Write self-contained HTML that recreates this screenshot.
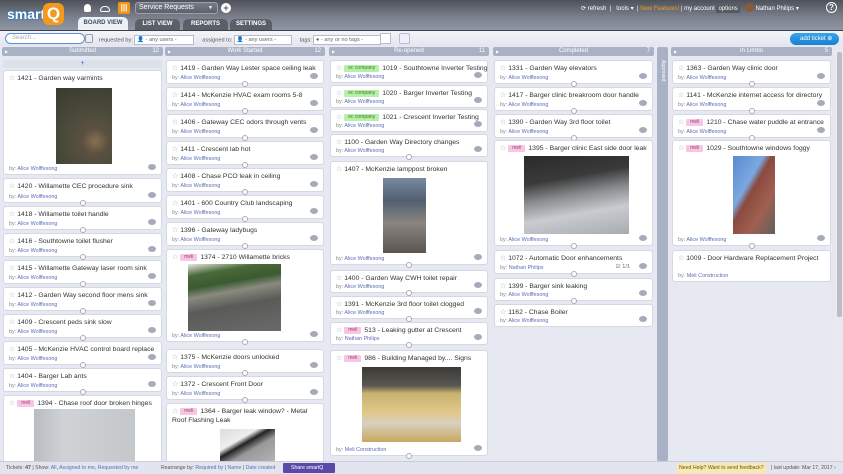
<!DOCTYPE html>
<html><head><meta charset="utf-8"><style>
*{margin:0;padding:0;box-sizing:border-box}
body{width:843px;height:474px;overflow:hidden;background:#e6e9f1;font-family:"Liberation Sans",sans-serif;position:relative}
.hdr{position:absolute;left:0;top:0;width:843px;height:30px;background:linear-gradient(#4f525a,#7c828f 60%,#8f96a4)}
.tb{position:absolute;left:0;top:30px;width:843px;height:16px;background:linear-gradient(#f3f4f8,#e3e6ee);border-top:1px solid #3d4048}
.tab{position:absolute;top:19px;height:11px;font-size:6px;font-weight:bold;color:#fff;text-align:center;line-height:11px;background:#5b5f68;border-radius:5px 5px 0 0}
.tab.a{background:#eef0f5;color:#3a4a6a;top:17px;height:13px;line-height:13px}
.col{position:absolute;top:0;height:461px}
.ch{position:absolute;top:47px;left:0;right:0;height:9px;background:#a9b2c5;border-radius:2px;color:#fff;font-size:6px;text-align:center;line-height:9px}
.ch i{position:absolute;right:4px;font-style:normal}
.ch b{position:absolute;left:3px;font-weight:normal;font-size:4px}
.c{position:absolute;left:1px;right:1px;background:#fff;border:1px solid #d3d8e3;border-radius:3px}
.t{position:absolute;left:5px;top:3px;font-size:6.8px;color:#333;white-space:nowrap;line-height:9px}
.t:before{content:"☆ ";color:#aaa;font-size:7px}
.b{position:absolute;left:5px;bottom:2px;font-size:5.4px;color:#888}
.b span{color:#5b6db8}
.m{position:absolute;right:5px;bottom:4px;width:8px;height:6px;background:#a5abb8;border-radius:50%}
.d{position:absolute;left:50%;bottom:-4px;width:6px;height:6px;margin-left:-3px;background:#fff;border:1px solid #aab;border-radius:50%}
.tg{display:inline-block;font-size:5px;padding:0 4px;margin-right:3px;border-radius:1px;line-height:7px;vertical-align:1px}
.g{background:#b7f0a8;color:#3a7a30}.p{background:#f7c6e3;color:#a0407a}
.im{position:absolute}
.ft{position:absolute;left:0;top:461px;width:843px;height:13px;background:#e2e5ee;border-top:1px solid #c9cedb;font-size:5.2px;color:#555;line-height:12px}
.ft span{color:#5b6db8}
</style></head><body>
<div class="hdr"></div>
<div style="position:absolute;left:7px;top:6px;font-size:14px;font-weight:bold;color:#fff;text-shadow:0 0 2px #2a7ac0,0 0 2px #2a7ac0">smart</div>
<div style="position:absolute;left:43px;top:3px;width:21px;height:22px;background:#f39a1e;border-radius:6px;color:#fff;font-weight:bold;font-size:17px;text-align:center;line-height:21px">Q</div>
<div style="position:absolute;left:84px;top:4px;width:7px;height:8px;background:#fff;border-radius:50% 50% 2px 2px"></div>
<div style="position:absolute;left:100px;top:6px;width:10px;height:6px;border:1.5px solid #fff;border-radius:5px 5px 2px 2px"></div>
<div style="position:absolute;left:118px;top:2px;width:12px;height:12px;background:#f29418;border-radius:2px;color:#fff;font-size:8px;text-align:center;line-height:12px;font-weight:bold">|||</div>
<div style="position:absolute;left:135px;top:2px;width:83px;height:12px;background:linear-gradient(#777c87,#5c616c);border:1px solid #9aa0ad;border-radius:3px;color:#fff;font-size:7px;line-height:10px;padding-left:3px">Service Requests<span style="position:absolute;right:4px;font-size:5px">▼</span></div>
<div style="position:absolute;left:221px;top:3px;width:10px;height:10px;background:#fff;border-radius:50%;color:#555;font-size:9px;text-align:center;line-height:10px;font-weight:bold">+</div>
<div class="tab a" style="left:78px;width:50px">BOARD VIEW</div>
<div class="tab" style="left:135px;width:45px">LIST VIEW</div>
<div class="tab" style="left:183px;width:45px">REPORTS</div>
<div class="tab" style="left:230px;width:42px">SETTINGS</div>
<div style="position:absolute;left:581px;top:3px;font-size:6px;color:#fff;white-space:nowrap">⟳ refresh &nbsp;| &nbsp; tools ▾ &nbsp;| <span style="color:#f39a1e">New Features!</span> | my account <span style="background:#555960;padding:1px 2px">options</span> &nbsp; <span style="display:inline-block;width:9px;height:9px;background:#8a5a3a;border-radius:50%;vertical-align:-2px"></span> Nathan Philips ▾</div>
<div style="position:absolute;left:826px;top:2px;width:11px;height:11px;border:1.5px solid #fff;border-radius:50%;color:#fff;font-size:8px;text-align:center;line-height:9px;font-weight:bold">?</div>
<div class="tb"></div>
<div style="position:absolute;left:5px;top:33px;width:80px;height:11px;background:#fff;border:1px solid #5b8fd0;border-radius:6px;font-size:6px;color:#aaa;font-style:italic;line-height:9px;padding-left:6px">Search...</div>
<div style="position:absolute;left:85px;top:34px;width:8px;height:9px;background:#eee;border:1px solid #99a;border-radius:2px"></div>
<div style="position:absolute;left:99px;top:35px;font-size:5.6px;color:#555;white-space:nowrap">requested by: <span style="display:inline-block;width:60px;height:10px;background:#fff;border:1px solid #bbc;vertical-align:middle;line-height:8px;color:#666">&nbsp;👤 - any users -</span> &nbsp; &nbsp; assigned to: <span style="display:inline-block;width:58px;height:10px;background:#fff;border:1px solid #bbc;vertical-align:middle;line-height:8px;color:#666">&nbsp;👤 - any users -</span> &nbsp; &nbsp; tags: <span style="display:inline-block;width:68px;height:10px;background:#fff;border:1px solid #bbc;vertical-align:middle;line-height:8px;color:#666">&nbsp;● - any or no tags -</span></div>
<div style="position:absolute;left:380px;top:33px;width:11px;height:11px;background:#fff;border:1px solid #bbc"></div>
<div style="position:absolute;left:399px;top:33px;width:11px;height:11px;background:#eef;border:1px solid #bbc;border-radius:2px"></div>
<div style="position:absolute;left:790px;top:33px;width:49px;height:12px;background:linear-gradient(#3aa3e8,#1a7fd0);border-radius:6px;color:#fff;font-size:6px;line-height:12px;padding-left:10px">add ticket ⊕</div>

<!-- Submitted -->
<div class="col" style="left:2px;width:161px">
<div class="ch"><b>▶</b>Submitted<i>12</i></div>
<div style="position:absolute;top:60px;left:1px;right:1px;height:8px;background:#dde1ea;border-radius:2px;color:#3a6ad0;font-size:7px;text-align:center;line-height:8px">+</div>
<div class="c" style="top:70px;height:105px"><div class="t">1421 - Garden way varmints</div><div class="im" style="left:52px;top:17px;width:56px;height:76px;background:radial-gradient(circle at 70% 70%,#8a7050 0,#5a5040 20%,#4a4a3a 50%,#3a3830)"></div><div class="b">by: <span>Alice Wolffesong</span></div><div class="m"></div></div>
<div class="c" style="top:178px;height:25px"><div class="t">1420 - Willamette CEC procedure sink</div><div class="b">by: <span>Alice Wolffesong</span></div><div class="m"></div><div class="d"></div></div>
<div class="c" style="top:206px;height:24px"><div class="t">1418 - Willamette toilet handle</div><div class="b">by: <span>Alice Wolffesong</span></div><div class="m"></div><div class="d"></div></div>
<div class="c" style="top:233px;height:24px"><div class="t">1416 - Southtowne toilet flusher</div><div class="b">by: <span>Alice Wolffesong</span></div><div class="m"></div><div class="d"></div></div>
<div class="c" style="top:260px;height:24px"><div class="t">1415 - Willamette Gateway laser room sink</div><div class="b">by: <span>Alice Wolffesong</span></div><div class="m"></div><div class="d"></div></div>
<div class="c" style="top:287px;height:24px"><div class="t">1412 - Garden Way second floor mens sink</div><div class="b">by: <span>Alice Wolffesong</span></div><div class="m"></div><div class="d"></div></div>
<div class="c" style="top:314px;height:24px"><div class="t">1409 - Crescent peds sink slow</div><div class="b">by: <span>Alice Wolffesong</span></div><div class="m"></div><div class="d"></div></div>
<div class="c" style="top:341px;height:24px"><div class="t">1405 - McKenzie HVAC control board replace</div><div class="b">by: <span>Alice Wolffesong</span></div><div class="m"></div><div class="d"></div></div>
<div class="c" style="top:368px;height:24px"><div class="t">1404 - Barger Lab ants</div><div class="b">by: <span>Alice Wolffesong</span></div><div class="m"></div><div class="d"></div></div>
<div class="c" style="top:395px;height:70px;border-bottom:none"><div class="t"><span class="tg p">meli</span>1394 - Chase roof door broken hinges</div><div class="im" style="left:30px;top:13px;width:101px;height:60px;background:linear-gradient(90deg,#b8bcc0,#d0d3d6 30%,#c4c7ca)"></div></div>
</div>

<!-- Work Started -->
<div class="col" style="left:165px;width:160px">
<div class="ch"><b>▶</b>Work Started<i>12</i></div>
<div class="c" style="top:60px;height:24px"><div class="t">1419 - Garden Way Lester space ceiling leak</div><div class="b">by: <span>Alice Wolffesong</span></div><div class="m"></div><div class="d"></div></div>
<div class="c" style="top:87px;height:24px"><div class="t">1414 - McKenzie HVAC exam rooms 5-8</div><div class="b">by: <span>Alice Wolffesong</span></div><div class="m"></div><div class="d"></div></div>
<div class="c" style="top:114px;height:24px"><div class="t">1406 - Gateway CEC odors through vents</div><div class="b">by: <span>Alice Wolffesong</span></div><div class="m"></div><div class="d"></div></div>
<div class="c" style="top:141px;height:24px"><div class="t">1411 - Crescent lab hot</div><div class="b">by: <span>Alice Wolffesong</span></div><div class="m"></div><div class="d"></div></div>
<div class="c" style="top:168px;height:24px"><div class="t">1408 - Chase PCO leak in ceiling</div><div class="b">by: <span>Alice Wolffesong</span></div><div class="m"></div><div class="d"></div></div>
<div class="c" style="top:195px;height:24px"><div class="t">1401 - 600 Country Club landscaping</div><div class="b">by: <span>Alice Wolffesong</span></div><div class="m"></div><div class="d"></div></div>
<div class="c" style="top:222px;height:24px"><div class="t">1396 - Gateway ladybugs</div><div class="b">by: <span>Alice Wolffesong</span></div><div class="m"></div><div class="d"></div></div>
<div class="c" style="top:249px;height:93px"><div class="t"><span class="tg p">meli</span>1374 - 2710 Willamette bricks</div><div class="im" style="left:21px;top:14px;width:93px;height:67px;background:linear-gradient(170deg,#e8e8e0 0,#4a6a3a 15%,#3a5a30 30%,#8a8a80 42%,#5a5a58 60%,#6a6a68)"></div><div class="b">by: <span>Alice Wolffesong</span></div><div class="m"></div><div class="d"></div></div>
<div class="c" style="top:349px;height:24px"><div class="t">1375 - McKenzie doors unlocked</div><div class="b">by: <span>Alice Wolffesong</span></div><div class="m"></div><div class="d"></div></div>
<div class="c" style="top:376px;height:24px"><div class="t">1372 - Crescent Front Door</div><div class="b">by: <span>Alice Wolffesong</span></div><div class="m"></div><div class="d"></div></div>
<div class="c" style="top:403px;height:62px;border-bottom:none"><div class="t" style="white-space:normal;width:150px"><span class="tg p">meli</span>1364 - Barger leak window? - Metal Roof Flashing Leak</div><div class="im" style="left:53px;top:25px;width:55px;height:40px;background:linear-gradient(150deg,#ddd 0,#eee 30%,#222 40%,#999 55%,#bbb)"></div></div>
</div>

<!-- Re-opened -->
<div class="col" style="left:329px;width:160px">
<div class="ch"><b>▶</b>Re-opened<i>11</i></div>
<div class="c" style="top:60px;height:23px"><div class="t"><span class="tg g">ec company</span>1019 - Southtowne Inverter Testing</div><div class="b">by: <span>Alice Wolffesong</span></div><div class="m"></div></div>
<div class="c" style="top:85px;height:23px"><div class="t"><span class="tg g">ec company</span>1020 - Barger Inverter Testing</div><div class="b">by: <span>Alice Wolffesong</span></div><div class="m"></div></div>
<div class="c" style="top:109px;height:23px"><div class="t"><span class="tg g">ec company</span>1021 - Crescent Inverter Testing</div><div class="b">by: <span>Alice Wolffesong</span></div><div class="m"></div></div>
<div class="c" style="top:134px;height:23px"><div class="t">1100 - Garden Way Directory changes</div><div class="b">by: <span>Alice Wolffesong</span></div><div class="m"></div><div class="d"></div></div>
<div class="c" style="top:161px;height:104px"><div class="t">1407 - McKenzie lamppost broken</div><div class="im" style="left:52px;top:16px;width:43px;height:75px;background:linear-gradient(#7a8aa0 0,#506070 30%,#8a8580 60%,#5a5550)"></div><div class="b">by: <span>Alice Wolffesong</span></div><div class="m"></div><div class="d"></div></div>
<div class="c" style="top:270px;height:23px"><div class="t">1400 - Garden Way CWH toilet repair</div><div class="b">by: <span>Alice Wolffesong</span></div><div class="m"></div><div class="d"></div></div>
<div class="c" style="top:296px;height:23px"><div class="t">1391 - McKenzie 3rd floor toilet clogged</div><div class="b">by: <span>Alice Wolffesong</span></div><div class="m"></div><div class="d"></div></div>
<div class="c" style="top:322px;height:23px"><div class="t"><span class="tg p">meli</span>513 - Leaking gutter at Crescent</div><div class="b">by: <span>Nathan Philips</span></div><div class="m"></div><div class="d"></div></div>
<div class="c" style="top:350px;height:106px"><div class="t"><span class="tg p">meli</span>986 - Building Managed by.... Signs</div><div class="im" style="left:31px;top:16px;width:99px;height:75px;background:linear-gradient(#3a3a38 0,#5a5850 25%,#c8b070 35%,#e0c888 60%,#d8d0c0 75%,#c8a860)"></div><div class="b">by: <span>Meli Construction</span></div><div class="m"></div><div class="d"></div></div>
</div>

<!-- Completed -->
<div class="col" style="left:493px;width:161px">
<div class="ch"><b>▶</b>Completed<i>7</i></div>
<div class="c" style="top:60px;height:24px"><div class="t">1331 - Garden Way elevators</div><div class="b">by: <span>Alice Wolffesong</span></div><div class="m"></div><div class="d"></div></div>
<div class="c" style="top:87px;height:24px"><div class="t">1417 - Barger clinic breakroom door handle</div><div class="b">by: <span>Alice Wolffesong</span></div><div class="m"></div><div class="d"></div></div>
<div class="c" style="top:114px;height:24px"><div class="t">1390 - Garden Way 3rd floor toilet</div><div class="b">by: <span>Alice Wolffesong</span></div><div class="m"></div><div class="d"></div></div>
<div class="c" style="top:140px;height:106px"><div class="t"><span class="tg p">meli</span>1395 - Barger clinic East side door leak</div><div class="im" style="left:29px;top:15px;width:105px;height:78px;background:linear-gradient(170deg,#2a2a2a 0,#3a3a3a 30%,#8a8e90 50%,#c8ccd0 70%,#a8acb0)"></div><div class="b">by: <span>Alice Wolffesong</span></div><div class="m"></div><div class="d"></div></div>
<div class="c" style="top:250px;height:24px"><div class="t">1072 - Automatic Door enhancements</div><div class="b">by: <span>Nathan Philips</span></div><div style="position:absolute;right:22px;bottom:3px;font-size:5.6px;color:#666">☑ 1/1</div><div class="m"></div><div class="d"></div></div>
<div class="c" style="top:278px;height:23px"><div class="t">1399 - Barger sink leaking</div><div class="b">by: <span>Alice Wolffesong</span></div><div class="m"></div><div class="d"></div></div>
<div class="c" style="top:304px;height:23px"><div class="t">1162 - Chase Boiler</div><div class="b">by: <span>Alice Wolffesong</span></div><div class="m"></div></div>
</div>

<!-- Approved -->
<div style="position:absolute;left:657px;top:47px;width:11px;height:414px;background:#a9b2c5;border-radius:2px"></div>
<div style="position:absolute;left:660px;top:60px;font-size:5px;color:#fff;writing-mode:vertical-rl">Approved</div>

<!-- In Limbo -->
<div class="col" style="left:671px;width:161px">
<div class="ch"><b>▶</b>In Limbo<i>5</i></div>
<div class="c" style="top:60px;height:24px"><div class="t">1363 - Garden Way clinic door</div><div class="b">by: <span>Alice Wolffesong</span></div><div class="m"></div><div class="d"></div></div>
<div class="c" style="top:87px;height:24px"><div class="t">1141 - McKenzie internet access for directory</div><div class="b">by: <span>Alice Wolffesong</span></div><div class="m"></div><div class="d"></div></div>
<div class="c" style="top:114px;height:24px"><div class="t"><span class="tg p">meli</span>1210 - Chase water puddle at entrance</div><div class="b">by: <span>Alice Wolffesong</span></div><div class="m"></div><div class="d"></div></div>
<div class="c" style="top:140px;height:106px"><div class="t"><span class="tg p">meli</span>1029 - Southtowne windows foggy</div><div class="im" style="left:60px;top:15px;width:42px;height:78px;background:linear-gradient(120deg,#5a8ad0 0,#7aa8e0 35%,#8a4a40 45%,#a06050 70%,#606060)"></div><div class="b">by: <span>Alice Wolffesong</span></div><div class="m"></div><div class="d"></div></div>
<div class="c" style="top:250px;height:32px"><div class="t" style="white-space:normal;width:150px">1009 - Door Hardware Replacement Project</div><div class="b">by: <span>Meli Construction</span></div></div>
</div>

<div style="position:absolute;left:835px;top:47px;width:8px;height:414px;background:#e8eaf0"></div>
<div style="position:absolute;left:837px;top:52px;width:5px;height:265px;background:#b8bdc8;border-radius:2px"></div>

<div class="ft">
<span style="position:absolute;left:6px;color:#555">Tickets: <b>47</b> | Show: <span>All</span>, <span>Assigned to me</span>, <span>Requested by me</span></span>
<span style="position:absolute;left:161px;color:#555">Rearrange by: <span>Required by</span> | <span>Name</span> | <span>Date created</span></span>
<span style="position:absolute;left:283px;top:1px;width:52px;height:10px;background:#5a4aa8;color:#fff;line-height:10px;padding-left:8px;border-radius:1px">Share smartQ</span>
<span style="position:absolute;left:677px;top:1px;height:10px;background:#fbe9a8;color:#555;line-height:10px;padding:0 2px">Need Help? Want to send feedback?</span>
<span style="position:absolute;left:771px;color:#555">| last update: Mar 17, 2017 ›</span>
</div>
</body></html>
